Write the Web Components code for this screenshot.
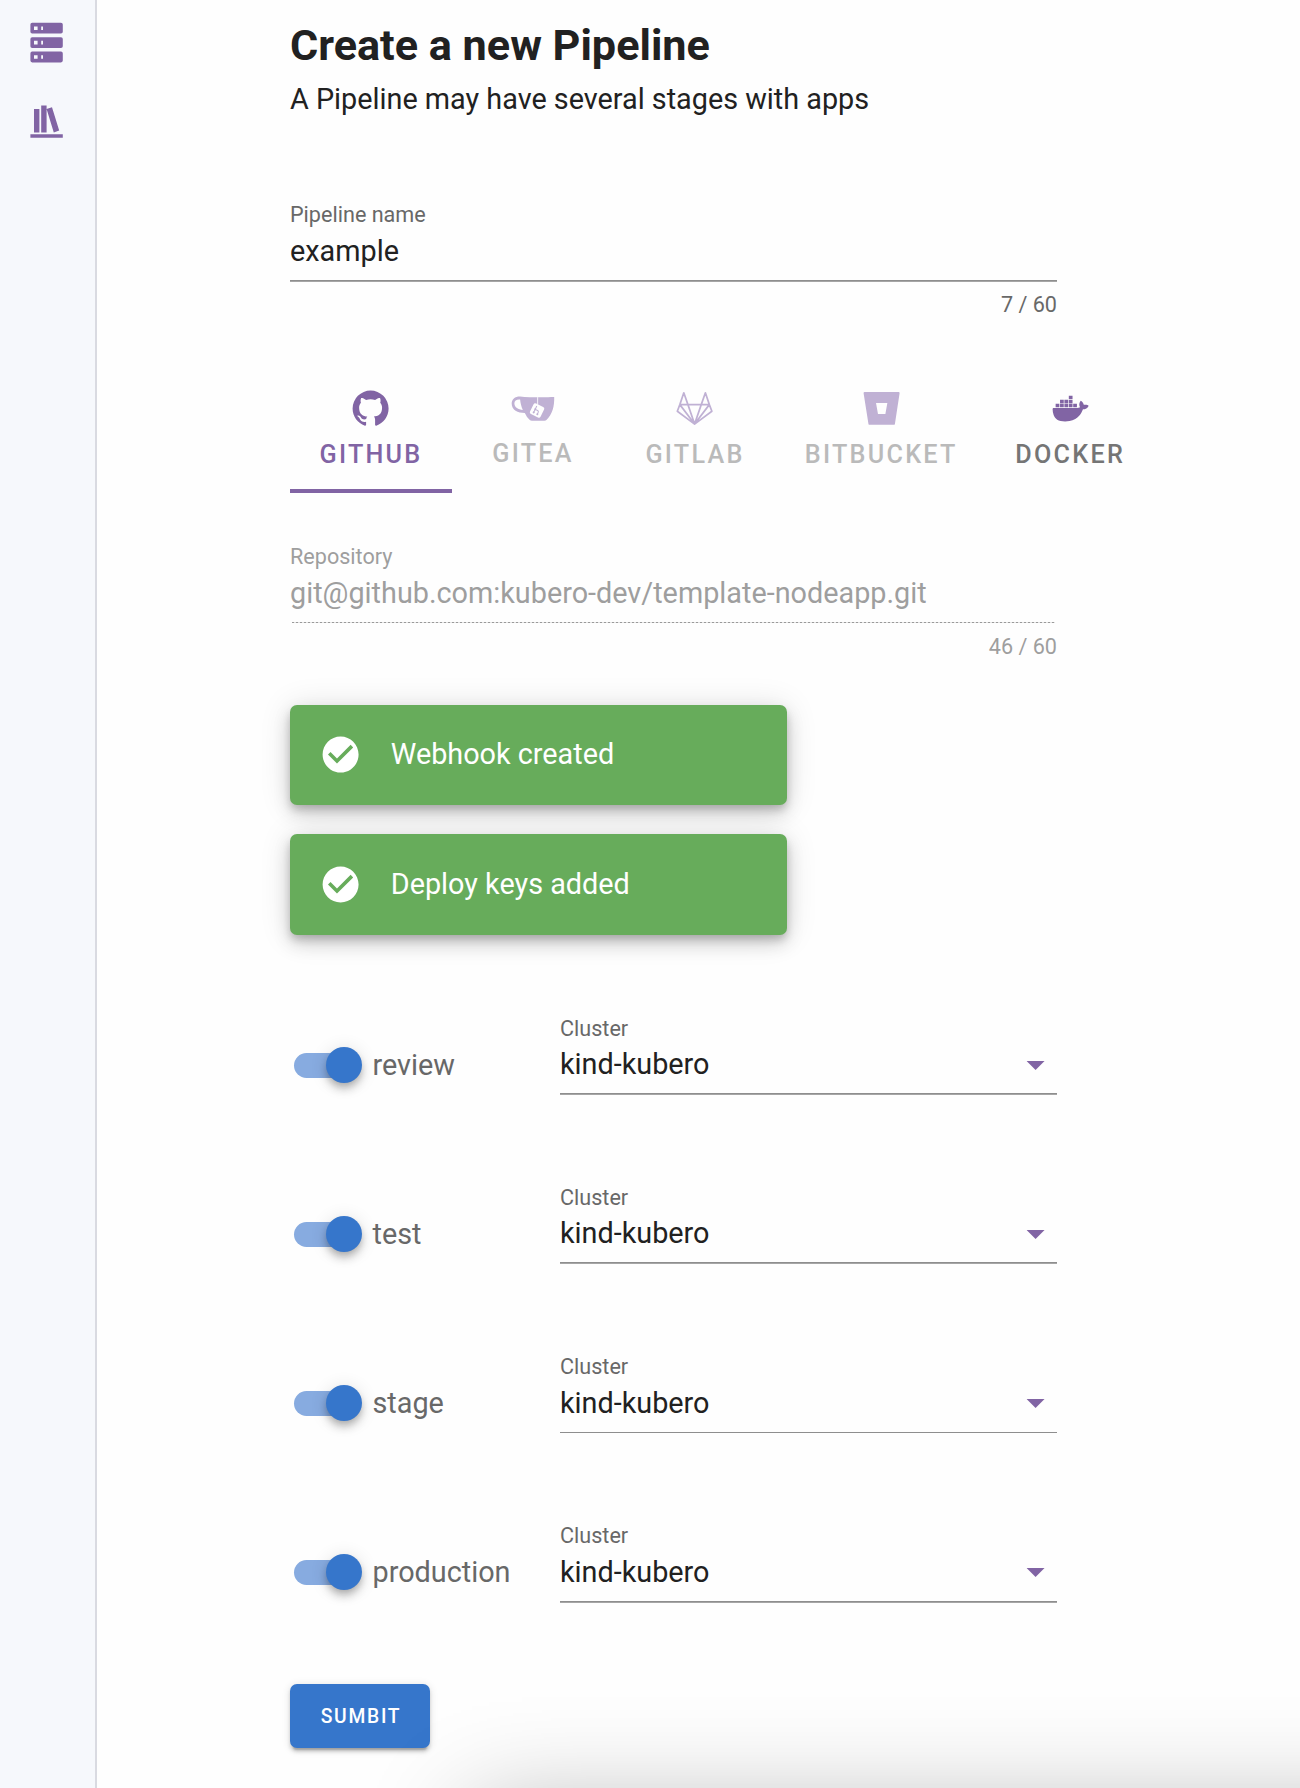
<!DOCTYPE html>
<html lang="en">
<head>
<meta charset="utf-8">
<title>Create a new Pipeline</title>
<style>
html,body{margin:0;height:1788px;overflow:hidden;background:#fefefe}
body{font-family:Roboto,"Liberation Sans",sans-serif;color:#212121}
</style>
</head>
<body>
<pipeline-page></pipeline-page>
<script>
const ICONS = {
  server: '<svg viewBox="0 0 24 24"><path d="M4,1H20A1,1 0 0,1 21,2V6A1,1 0 0,1 20,7H4A1,1 0 0,1 3,6V2A1,1 0 0,1 4,1M4,9H20A1,1 0 0,1 21,10V14A1,1 0 0,1 20,15H4A1,1 0 0,1 3,14V10A1,1 0 0,1 4,9M4,17H20A1,1 0 0,1 21,18V22A1,1 0 0,1 20,23H4A1,1 0 0,1 3,22V18A1,1 0 0,1 4,17M9,5H10V3H9V5M9,13H10V11H9V13M9,21H10V19H9V21M5,3V5H7V3H5M5,11V13H7V11H5M5,19V21H7V19H5Z"/></svg>',
  books: '<svg viewBox="0 0 24 24"><path d="M9 3V18H12V3H9M12 5L16 18L19 17L15 4L12 5M5 5V18H8V5H5M3 19V21H21V19H3Z"/></svg>',
  github: '<svg viewBox="0 0 24 24"><path d="M12,2A10,10 0 0,0 2,12C2,16.42 4.87,20.17 8.84,21.5C9.34,21.58 9.5,21.27 9.5,21C9.5,20.77 9.5,20.14 9.5,19.31C6.73,19.91 6.14,17.97 6.14,17.97C5.68,16.81 5.03,16.5 5.03,16.5C4.12,15.88 5.1,15.9 5.1,15.9C6.1,15.97 6.63,16.93 6.63,16.93C7.5,18.45 8.97,18 9.54,17.76C9.63,17.11 9.89,16.67 10.17,16.42C7.95,16.17 5.62,15.31 5.62,11.5C5.62,10.39 6,9.5 6.65,8.79C6.55,8.54 6.2,7.5 6.75,6.15C6.75,6.15 7.59,5.88 9.5,7.17C10.29,6.95 11.15,6.84 12,6.84C12.85,6.84 13.71,6.95 14.5,7.17C16.41,5.88 17.25,6.15 17.25,6.15C17.8,7.5 17.45,8.54 17.35,8.79C18,9.5 18.38,10.39 18.38,11.5C18.38,15.32 16.04,16.16 13.81,16.41C14.17,16.72 14.5,17.33 14.5,18.26C14.5,19.6 14.5,20.68 14.5,21C14.5,21.27 14.66,21.59 15.17,21.5C19.14,20.16 22,16.42 22,12A10,10 0 0,0 12,2Z"/></svg>',
  gitea: '<svg viewBox="-2 -28 128 128"><path fill-rule="evenodd" d="M25 0C50 3 95 3 126 2C127 28 121 54 103 70Q101 72 97 72H60Q56 72 53 69Q44 61 39 49C18 49 0 41 0 21C0 8 9 0 25 0ZM25 9C15 8 8 12 8 21C9 33 19 39 33 40C28 29 26 19 25 9Z"/><path d="M77 2V24" fill="none" stroke="#fefefe" stroke-width="2.6"/><g transform="rotate(26 75 41)"><rect x="58" y="24" width="35" height="35" rx="6" fill="#fefefe"/><path d="M69 30V52M69 41H77Q81 41 81 45V52" fill="none" stroke="currentColor" stroke-width="3"/><circle cx="69" cy="51" r="3"/><circle cx="81" cy="51" r="3"/><circle cx="69" cy="40" r="3"/></g></svg>',
  gitlab: '<svg viewBox="0 0 24 24"><g fill="none" stroke="currentColor" stroke-width=".95" stroke-linejoin="round"><path d="M12 20.6L2.4 13.5L3.8 9.8L6 3.2L8.3 9.8L12 20.6L15.7 9.8L18 3.2L20.2 9.8L21.6 13.5ZM3.8 9.8H20.2M3.8 9.8L12 20.6L20.2 9.8"/></g></svg>',
  bitbucket: '<svg viewBox="0 0 24 24"><path fill-rule="evenodd" d="M2.6 2.8H21.4Q22.1 2.8 22 3.5L19.4 20.5Q19.3 21 18.8 21H5.3Q4.8 21 4.7 20.5L2 3.5Q1.9 2.8 2.6 2.8ZM8.9 8.9L10 15H14.1L15.2 8.9Z"/></svg>',
  docker: '<svg viewBox="0 0 24 24"><path d="M21.81 10.25C21.75 10.21 21.25 9.82 20.17 9.82C19.89 9.82 19.61 9.85 19.33 9.9C19.12 8.5 17.95 7.79 17.9 7.76L17.61 7.59L17.43 7.86C17.19 8.22 17 8.63 16.92 9.05C16.72 9.85 16.84 10.61 17.25 11.25C16.76 11.53 15.96 11.6 15.79 11.61H2.62C2.28 11.61 2 11.89 2 12.24C2 13.39 2.18 14.54 2.58 15.62C3.03 16.81 3.71 17.69 4.58 18.23C5.56 18.83 7.17 19.17 8.97 19.17C9.79 19.17 10.61 19.1 11.42 18.95C12.54 18.75 13.62 18.36 14.61 17.79C15.43 17.32 16.16 16.72 16.78 16C17.82 14.83 18.43 13.5 18.88 12.35H19.07C20.21 12.35 20.92 11.89 21.31 11.5C21.57 11.26 21.77 10.97 21.91 10.64L22 10.4Z"/><path d="M3.69 9.34h2.07v1.9h-2.07zM6.13 9.34h2.07v1.9h-2.07zM8.57 9.34h2.07v1.9h-2.07zM11.01 9.34h2.07v1.9h-2.07zM13.45 9.34h2.07v1.9h-2.07zM6.13 7.08h2.07v1.9h-2.07zM8.57 7.08h2.07v1.9h-2.07zM11.01 7.08h2.07v1.9h-2.07zM11.01 4.83h2.07v1.9h-2.07z"/></svg>',
  check: '<svg viewBox="0 0 24 24"><path d="M12 2C6.5 2 2 6.5 2 12S6.5 22 12 22 22 17.5 22 12 17.5 2 12 2M10 17L5 12L6.41 10.59L10 14.17L17.59 6.58L19 8L10 17Z"/></svg>',
  down: '<svg viewBox="0 0 24 24"><path d="M7,10L12,15L17,10H7Z"/></svg>'
};
function define(name, render) {
  customElements.define(name, class extends HTMLElement {
    constructor() { super(); this.attachShadow({ mode: 'open' }); }
    connectedCallback() { this.shadowRoot.innerHTML = render(this); }
  });
}
define('kb-icon', el => `<style>
:host{display:block;flex:none;width:43.2px;height:43.2px;color:#8164a4}
svg{display:block;width:100%;height:100%;fill:currentColor}
</style>${ICONS[el.getAttribute('name')]}`);

define('side-nav', () => `<style>
:host{display:flex;flex-direction:column;gap:35.6px;box-sizing:border-box;flex:none;width:97px;height:100%;padding:21.4px 0 0 24.5px;background:#f6f8fc;border-right:2px solid #d9dae1}
</style><kb-icon name="server"></kb-icon><kb-icon name="books"></kb-icon>`);

define('text-field', el => `<style>
:host{display:flex;flex-direction:column;color:#212121}
label{font-size:21.6px;line-height:24px;color:#686868}
.value{display:flex;justify-content:space-between;font-size:28.8px;line-height:40px;margin-top:4px;padding-bottom:9px}
.line{height:2px;background:linear-gradient(#8e8e8e 50%,#a6a6a6 50%)}
.count{align-self:flex-end;font-size:21.6px;line-height:24px;margin-top:11px;color:#686868}
:host([disabled]),:host([disabled]) label,:host([disabled]) .count{color:#9e9e9e}
:host([disabled]) .line{margin:0 2px;background:linear-gradient(#fefefe,#fefefe) 0 1px/100% 1px no-repeat,repeating-linear-gradient(90deg,#9a9a9a 0 2px,#e4e4e4 2px 4px)}
</style><label>${el.getAttribute('label')}</label><div class="value"><slot></slot></div><div class="line"></div><div class="count">${el.getAttribute('count')}</div>`);

define('cluster-select', el => `<style>
:host{display:flex;flex-direction:column;width:497px;height:78px;color:#212121}
label{font-size:21.6px;line-height:24px;color:#686868}
.value{display:flex;flex:none;justify-content:space-between;align-items:center;font-size:28.8px;line-height:40px;height:40px;margin-top:3px;padding:0 0 9px}
kb-icon{margin-top:1px}
.line{flex:none;height:2px;background:linear-gradient(#8e8e8e 50%,#a6a6a6 50%)}
:host([line="thin"]) .value,:host([line="low"]) .value{margin-top:4px}
:host([line="thin"]) kb-icon,:host([line="low"]) kb-icon{margin-top:0}
:host([line="thin"]) .line{height:1px;background:#8e8e8e}
</style><label>Cluster</label><div class="value"><slot></slot><kb-icon name="down"></kb-icon></div><div class="line"></div>`);

define('toggle-switch', () => `<style>
:host{display:flex;align-items:center;height:40px;padding-left:4px;font-size:28.8px;line-height:40px;color:#686868}
.track{display:flex;align-items:center;justify-content:flex-end;width:64px;height:25px;border-radius:13px;background:#87abe0;margin-right:14.5px}
.thumb{flex:none;width:36px;height:36px;margin-right:-4px;border-radius:50%;background:#3676cb;box-shadow:0 3.6px 7.1px -1.8px rgba(0,0,0,.2),0 7.1px 8.9px rgba(0,0,0,.14),0 1.8px 17.8px rgba(0,0,0,.12)}
</style><div class="track"><div class="thumb"></div></div><span><slot></slot></span>`);

define('stage-row', el => `<style>
:host{display:flex;justify-content:space-between;height:78px}
toggle-switch{margin-top:28.2px}
</style><toggle-switch>${el.getAttribute('name')}</toggle-switch><cluster-select line="${el.getAttribute('line') || ''}"><slot></slot></cluster-select>`);

define('source-tab', el => `<style>
:host{display:flex;flex-direction:column;align-items:center;box-sizing:border-box;flex:none;height:128px;min-width:162px;padding:21.8px 28.8px 0;border-bottom:4px solid transparent;font-size:25.2px;font-weight:500;line-height:30px;letter-spacing:.0893em;color:#757575}
kb-icon{margin-bottom:10.4px}
:host([active]){color:#8164a4;border-color:#8164a4}
:host([disabled]){color:#bababa}
:host([disabled]) kb-icon{color:#c0b1d4}
:host([raised]) span{margin-top:-1px}
</style><kb-icon name="${el.getAttribute('icon')}"></kb-icon><span><slot></slot></span>`);

define('success-alert', () => `<style>
:host{display:flex;align-items:center;box-sizing:border-box;width:497px;height:100px;padding-left:28.8px;border-radius:7px;background:#67ac5b;color:#fff;font-size:28.8px;line-height:40px;box-shadow:0 5.3px 8.9px -1.8px rgba(0,0,0,.2),0 8.9px 17.8px rgba(0,0,0,.14),0 1.8px 32px rgba(0,0,0,.12)}
kb-icon{color:#fff;margin-right:28.8px}
span{padding-bottom:2px}
</style><kb-icon name="check"></kb-icon><span><slot></slot></span>`);

define('submit-button', () => `<style>
:host{display:flex;align-items:center;justify-content:center;box-sizing:border-box;width:140px;height:64px;padding:0 0 0 2px;border-radius:7px;background:#3676cb;color:#fff;font-size:19.3px;font-weight:500;letter-spacing:.0893em;box-shadow:0 5.3px 1.8px -3.6px rgba(0,0,0,.2),0 3.6px 3.6px rgba(0,0,0,.14),0 1.8px 8.9px rgba(0,0,0,.12)}
</style><slot></slot>`);

define('floor-shadow', () => `<style>
:host{position:absolute;left:0;right:0;bottom:0;height:120px;overflow:hidden;pointer-events:none}
div{position:absolute;left:472px;top:143px;width:1200px;height:400px;box-shadow:0 0 100px rgba(0,0,0,.3)}
</style><div></div>`);

define('pipeline-page', () => `<style>
:host{display:flex;position:relative;width:1300px;height:1788px;overflow:hidden;background:#fefefe}
main{display:flex;flex-direction:column;width:767px;margin-left:193px}
h1{margin:21px 0 0;font-size:43.2px;line-height:50px;font-weight:700}
p{margin:8px 0 0;font-size:28.8px;line-height:40px}
text-field{margin-top:84px}
.tabs{display:flex;margin-top:48px}
.tabs+text-field{margin-top:52px}
.alerts{display:flex;flex-direction:column;gap:29px;margin-top:46px}
success-alert+success-alert{height:101px}
.stages{display:flex;flex-direction:column;gap:91px;margin-top:82px}
submit-button{margin-top:82px}
</style>
<side-nav></side-nav>
<main>
<h1>Create a new Pipeline</h1>
<p>A Pipeline may have several stages with apps</p>
<text-field label="Pipeline name" count="7 / 60">example</text-field>
<div class="tabs">
<source-tab icon="github" active>GITHUB</source-tab>
<source-tab icon="gitea" disabled raised>GITEA</source-tab>
<source-tab icon="gitlab" disabled>GITLAB</source-tab>
<source-tab icon="bitbucket" disabled>BITBUCKET</source-tab>
<source-tab icon="docker">DOCKER</source-tab>
</div>
<text-field label="Repository" count="46 / 60" disabled>git@github.com:kubero-dev/template-nodeapp.git</text-field>
<div class="alerts"><success-alert>Webhook created</success-alert><success-alert>Deploy keys added</success-alert></div>
<div class="stages">
<stage-row name="review">kind-kubero</stage-row>
<stage-row name="test">kind-kubero</stage-row>
<stage-row name="stage" line="thin">kind-kubero</stage-row>
<stage-row name="production" line="low">kind-kubero</stage-row>
</div>
<submit-button>SUMBIT</submit-button>
</main>
<floor-shadow></floor-shadow>`);
</script>
</body>
</html>
